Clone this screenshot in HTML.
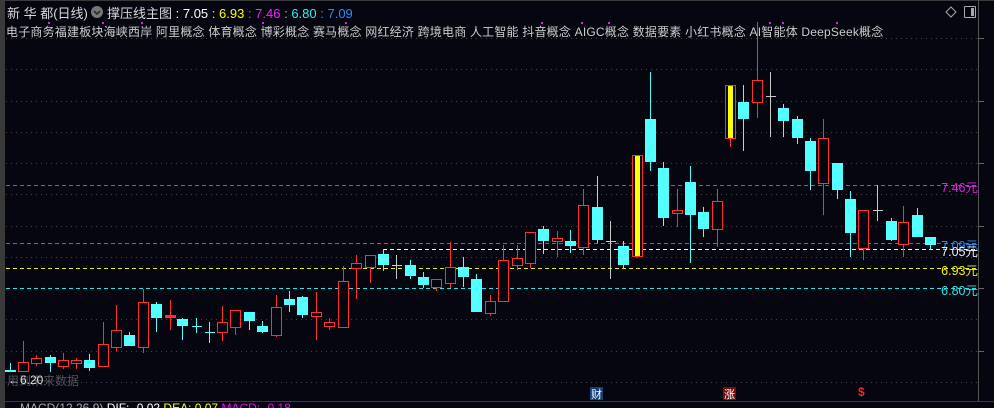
<!DOCTYPE html>
<html><head><meta charset="utf-8"><style>
html,body{margin:0;padding:0;background:#05060f;width:994px;height:408px;overflow:hidden}
body{position:relative;font-family:"Liberation Sans","Noto Sans CJK SC",sans-serif}
.t{position:absolute;white-space:nowrap;font-size:13px;color:#d8d8d8}
</style></head><body>
<svg width="994" height="408" style="position:absolute;left:0;top:0" shape-rendering="crispEdges">
<rect x="0" y="0" width="5" height="408" fill="#3a3a3a"/>
<line x1="5" y1="0.5" x2="994" y2="0.5" stroke="#3a3a3a"/>
<line x1="978.5" y1="0" x2="978.5" y2="401" stroke="#555"/>
<line x1="5" y1="401.5" x2="994" y2="401.5" stroke="#3a3a3a"/>
<g stroke="#444" stroke-dasharray="1 4">
<line x1="6" y1="38.5" x2="978" y2="38.5"/><line x1="6" y1="69.5" x2="978" y2="69.5"/><line x1="6" y1="101.5" x2="978" y2="101.5"/><line x1="6" y1="132.5" x2="978" y2="132.5"/><line x1="6" y1="163.5" x2="978" y2="163.5"/><line x1="6" y1="194.5" x2="978" y2="194.5"/><line x1="6" y1="226.5" x2="978" y2="226.5"/><line x1="6" y1="257.5" x2="978" y2="257.5"/><line x1="6" y1="319.5" x2="978" y2="319.5"/><line x1="6" y1="351.5" x2="978" y2="351.5"/><line x1="6" y1="382.5" x2="978" y2="382.5"/>
</g>
<g stroke="#666"><line x1="978" y1="38.5" x2="984" y2="38.5"/><line x1="978" y1="101.5" x2="984" y2="101.5"/><line x1="978" y1="163.5" x2="984" y2="163.5"/><line x1="978" y1="226.5" x2="984" y2="226.5"/><line x1="978" y1="288.5" x2="984" y2="288.5"/><line x1="978" y1="351.5" x2="984" y2="351.5"/></g>
<g stroke-dasharray="4 3">
<line x1="6" y1="185.5" x2="978" y2="185.5" stroke="#e020e0"/>
<line x1="6" y1="243.5" x2="978" y2="243.5" stroke="#1e7fe8"/>
<line x1="383" y1="249.5" x2="978" y2="249.5" stroke="#ffffff"/>
<line x1="6" y1="268.5" x2="978" y2="268.5" stroke="#f0f000"/>
<line x1="6" y1="288.5" x2="978" y2="288.5" stroke="#20e8e8"/>
</g>
<g id="k"></g>
<rect x="590" y="387" width="13" height="13" fill="#12407a"/>
<rect x="723" y="387" width="13" height="13" fill="#7a0a0a"/>
<path d="M951 7 L956 12 L951 17 L946 12 Z" fill="none" stroke="#aaa" shape-rendering="auto"/>
<rect x="964.5" y="6.5" width="11" height="11" rx="1" fill="none" stroke="#aaa"/>
<rect x="971" y="8" width="3" height="8" fill="#aaa"/>
<circle cx="97" cy="12" r="6" fill="#777" shape-rendering="auto"/>
<path d="M94 11 L97 14 L100 11" stroke="#222" stroke-width="1.5" fill="none" shape-rendering="auto"/>
<g fill="#e020e0"><rect x="48" y="22" width="2" height="2"/><rect x="102" y="22" width="2" height="2"/><rect x="141" y="22" width="2" height="2"/><rect x="262" y="22" width="2" height="2"/><rect x="345" y="22" width="2" height="2"/><rect x="541" y="22" width="2" height="2"/><rect x="581" y="22" width="2" height="2"/><rect x="608" y="22" width="2" height="2"/><rect x="769" y="22" width="2" height="2"/><rect x="782" y="22" width="2" height="2"/><rect x="836" y="22" width="2" height="2"/></g>
</svg>
<script>
var d=[[10,370,371,363,372,'c'],[23,362,371,341,372,'r'],[36,358,363,355,366,'r'],[50,357,363,355,372,'c'],[63,360,366,353,369,'r'],[76,360,363,358,369,'r'],[89,360,368,354,371,'c'],[103,344,366,322,366,'r'],[116,330,347,305,351,'r'],[129,335,346,332,346,'c'],[143,302,347,289,353,'r'],[156,304,318,302,332,'c'],[170,315,317,300,330,'f'],[182,319,326,318,340,'c'],[196,326,326,318,333,'x'],[209,332,332,322,343,'x'],[222,322,332,306,341,'r'],[235,310,327,310,335,'r'],[249,312,321,312,330,'c'],[262,326,332,321,333,'c'],[276,307,335,295,337,'r'],[289,299,305,291,312,'c'],[302,297,315,296,318,'c'],[316,312,316,292,340,'r'],[329,322,326,318,330,'r'],[343,281,327,266,327,'r'],[356,263,268,255,299,'r'],[370,255,267,255,283,'r'],[383,254,265,249,271,'c'],[396,265,265,255,279,'g'],[410,265,276,260,279,'c'],[423,277,285,272,288,'c'],[436,279,287,279,291,'r'],[450,267,283,242,288,'r'],[463,267,277,257,287,'c'],[476,279,312,274,312,'c'],[490,301,313,295,316,'r'],[503,260,301,245,301,'r'],[517,258,265,245,270,'r'],[530,232,263,232,268,'r'],[543,229,241,226,254,'c'],[557,238,241,231,257,'r'],[570,241,246,230,253,'c'],[583,205,247,189,255,'r'],[597,207,240,176,243,'c'],[610,241,241,221,279,'g'],[623,246,265,241,268,'c'],[637,155,256,155,258,'y'],[650,119,162,72,171,'c'],[663,168,218,162,226,'c'],[677,210,213,189,227,'r'],[690,182,215,166,263,'c'],[703,212,229,207,237,'c'],[717,201,229,189,247,'r'],[730,85,138,85,147,'y'],[743,102,119,85,151,'c'],[757,80,102,22,118,'r'],[770,96,96,72,137,'g'],[783,108,121,104,137,'c'],[797,119,138,116,144,'c'],[810,141,171,138,190,'c'],[823,138,183,119,215,'r'],[837,163,190,163,199,'c'],[850,199,233,191,257,'c'],[863,210,248,210,260,'r'],[877,210,210,185,221,'g'],[891,221,240,218,241,'c'],[903,222,244,206,257,'r'],[917,215,237,208,237,'c'],[930,237,245,237,250,'c']];
var s='',C='#54ffff',R='#ff3030',G='#c8c8c8';
d.forEach(function(a){var x=a[0],t=a[1],b=a[2],h=a[3],l=a[4],k=a[5];
var col=k=='r'||k=='f'||k=='y'?R:(k=='g'?G:C);
s+='<line x1="'+(x+.5)+'" y1="'+h+'" x2="'+(x+.5)+'" y2="'+l+'" stroke="'+col+'"/>';
if(k=='x'||k=='g'){s+='<line x1="'+(x-4)+'" y1="'+(t+.5)+'" x2="'+(x+6)+'" y2="'+(t+.5)+'" stroke="'+col+'"/>';}
else if(k=='c'){s+='<rect x="'+(x-5)+'" y="'+t+'" width="11" height="'+Math.max(b-t,2)+'" fill="'+C+'"/>';}
else if(k=='f'){s+='<rect x="'+(x-5)+'" y="'+t+'" width="11" height="'+(b-t+1)+'" fill="'+R+'"/>';}
else if(k=='y'){s+='<rect x="'+(x-4.5)+'" y="'+(t+.5)+'" width="10" height="'+(b-t)+'" fill="#05060f" stroke="'+R+'"/><rect x="'+(x-2)+'" y="'+(t+1)+'" width="5" height="'+(b-t-1)+'" fill="#ffff00"/>';}
else{s+='<rect x="'+(x-4.5)+'" y="'+(t+.5)+'" width="10" height="'+Math.max(b-t,1)+'" fill="#05060f" stroke="'+R+'"/>';}
});
document.getElementById('k').innerHTML=s;
</script>
<div class="t" style="left:7px;top:3px;font-size:13px">新 华 都(日线)</div>
<div class="t" style="left:107px;top:3px;font-size:13px">撑压线主图 <span style="color:#fff">: 7.05</span> <span style="color:#ffff00">: 6.93</span> <span style="color:#ff20ff">: 7.46</span> <span style="color:#30f0f0">: 6.80</span> <span style="color:#2a8cff">: 7.09</span></div>
<div class="t" style="left:6px;top:23px;font-size:12px;letter-spacing:0.2px;color:#ccc">电子商务福建板块海峡西岸 阿里概念 体育概念 博彩概念 赛马概念 网红经济 跨境电商 人工智能 抖音概念 AIGC概念 数据要素 小红书概念 AI智能体 DeepSeek概念</div>
<div class="t" style="right:16px;top:177px;font-size:12.5px;color:#e020e0">7.46元</div>
<div class="t" style="right:16px;top:235px;font-size:12.5px;color:#2a8cff">7.09元</div>
<div class="t" style="right:16px;top:241px;font-size:12.5px;color:#eee">7.05元</div>
<div class="t" style="right:16px;top:260px;font-size:12.5px;color:#f0f000">6.93元</div>
<div class="t" style="right:16px;top:280px;font-size:12.5px;color:#30e0e0">6.80元</div>
<div class="t" style="left:7px;top:372px;font-size:12px;color:#555">用到未来数据</div>
<div class="t" style="left:8px;top:373px;font-size:12px;color:#ddd">←6.20</div>
<div class="t" style="left:591px;top:386px;font-size:11px;color:#fff">财</div>
<div class="t" style="left:724px;top:386px;font-size:11px;color:#fff">涨</div>
<div class="t" style="left:858px;top:385px;font-size:12px;color:#ff2020;font-weight:bold">$</div>
<div class="t" style="left:20px;top:401px;font-size:12px;color:#aaa">MACD(12,26,9) <span style="color:#fff">DIF: -0.02</span> <span style="color:#ff0">DEA: 0.07</span> <span style="color:#f0f">MACD: -0.18</span></div>
</body></html>
